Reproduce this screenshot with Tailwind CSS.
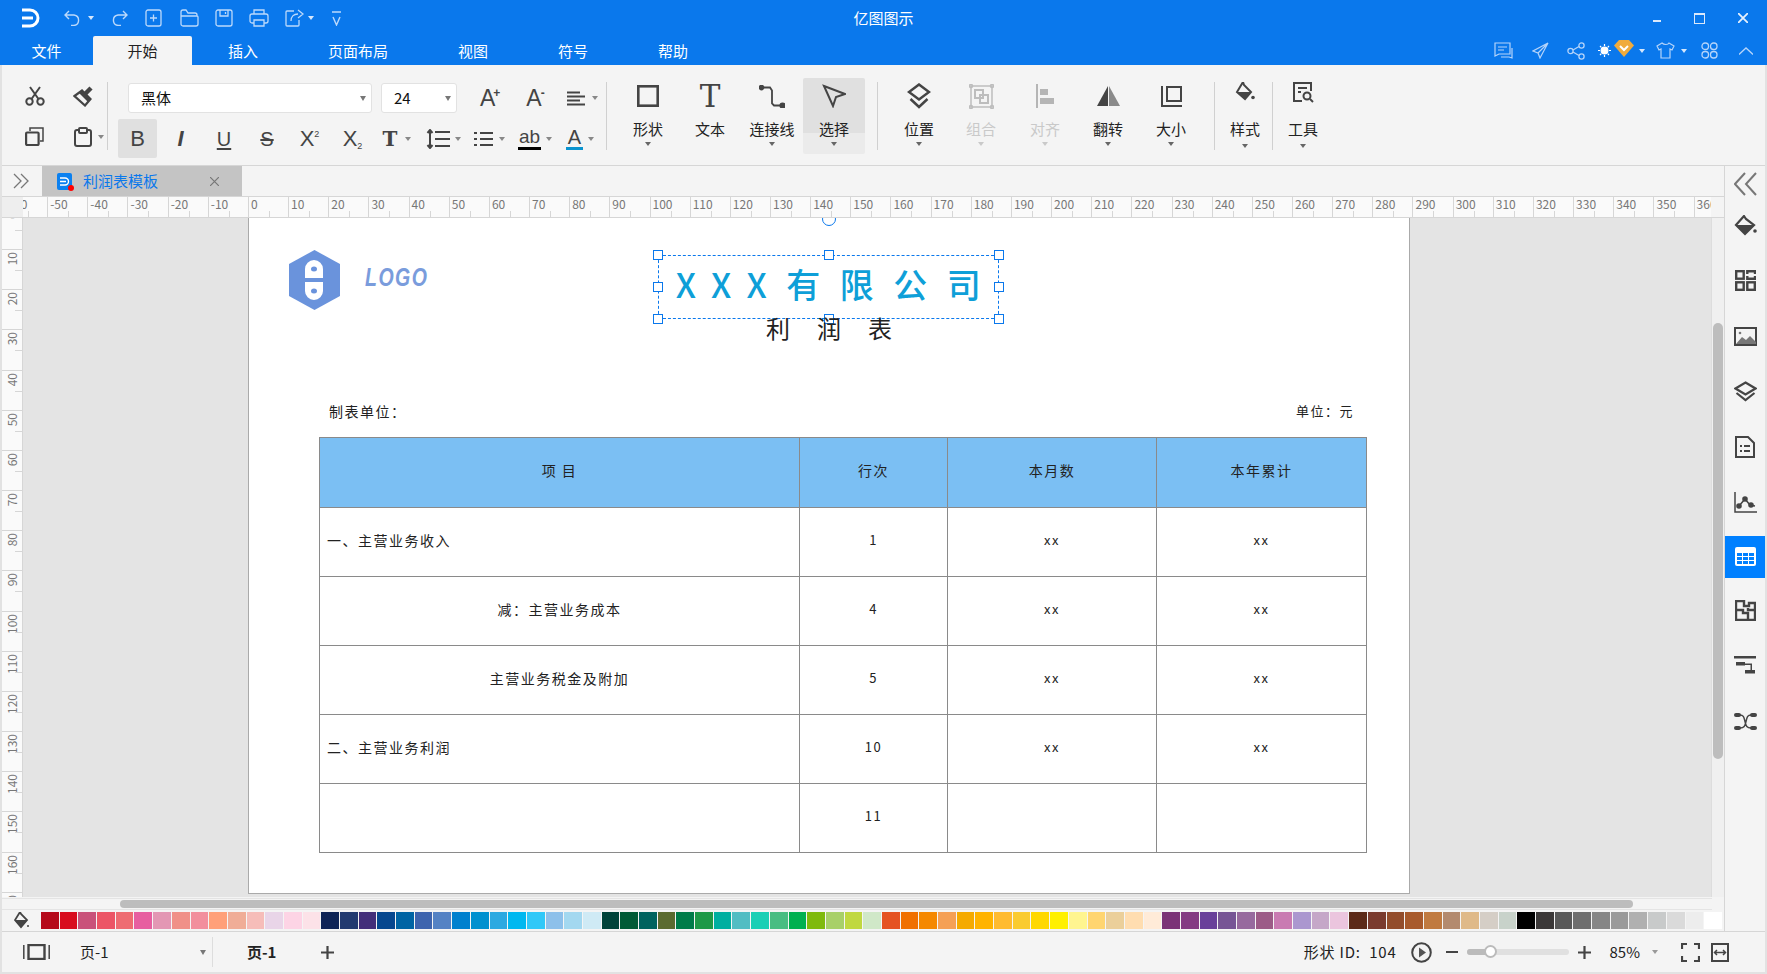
<!DOCTYPE html>
<html lang="zh-CN">
<head>
<meta charset="UTF-8">
<title>亿图图示</title>
<script src="https://cdn.jsdelivr.net/npm/@tailwindcss/browser@4"></script>
</head>
<body class="w-[1767px] h-[974px] overflow-hidden flex flex-col bg-[#e2e2e2] text-[#222] font-['Noto_Sans_CJK_SC',sans-serif]">

<!-- title bar -->
<header class="bg-[#0a78ec] h-[65px] flex-none text-white">
  <div class="h-[36px] grid grid-cols-[1fr_auto_1fr] items-center">
    <div class="flex items-center text-[#bcd9fb]">
      <svg class="ml-[22px] w-[18px] h-[20px]" viewBox="0 0 18 20" fill="none" stroke="#fff" stroke-width="3"><path d="M0 2H8a8 8 0 0 1 0 16H0M0 10H11"/></svg>
      <svg class="ml-[24px] w-[17px] h-[16px]" viewBox="0 0 17 16" fill="none" stroke="currentColor" stroke-width="1.4"><path d="M5 1L1 5l4 4M1 5h9a5.300 5.300 0 0 1 0 10.500H7"/></svg>
      <span class="ml-[7px] w-0 h-0 border-x-[3px] border-x-transparent border-t-[4px] border-t-[#d5e7fc]"></span>
      <svg class="ml-[18px] w-[16px] h-[16px]" viewBox="0 0 16 16" fill="none" stroke="currentColor" stroke-width="1.4"><path d="M11 1l4 4-4 4M15 5H6a5.300 5.300 0 0 0 0 10.500h3"/></svg>
      <svg class="ml-[17px] w-[17px] h-[18px]" viewBox="0 0 17 18" fill="none" stroke="currentColor" stroke-width="1.3"><rect x="1" y="1" width="15" height="16" rx="2"/><path d="M8.500 5.500v7M5 9h7"/></svg>
      <svg class="ml-[18px] w-[19px] h-[18px]" viewBox="0 0 19 18" fill="none" stroke="currentColor" stroke-width="1.3"><path d="M1 15V3a2 2 0 0 1 2-2h3l2 3h7a2 2 0 0 1 2 2v1M1 7h16a1 1 0 0 1 1 1v7a2 2 0 0 1-2 2H3a2 2 0 0 1-2-2z"/></svg>
      <svg class="ml-[16px] w-[18px] h-[18px]" viewBox="0 0 18 18" fill="none" stroke="currentColor" stroke-width="1.3"><rect x="1" y="1" width="16" height="16" rx="2"/><path d="M5 1v6h8V1M10.500 3v2"/></svg>
      <svg class="ml-[16px] w-[20px] h-[18px]" viewBox="0 0 20 18" fill="none" stroke="currentColor" stroke-width="1.3"><path d="M5 5V1h10v4M5 14H3a2 2 0 0 1-2-2V7a2 2 0 0 1 2-2h14a2 2 0 0 1 2 2v5a2 2 0 0 1-2 2h-2M5 11h10v6H5z"/></svg>
      <svg class="ml-[16px] w-[19px] h-[18px]" viewBox="0 0 19 18" fill="none" stroke="currentColor" stroke-width="1.3"><path d="M9 2H2a1 1 0 0 0-1 1v13a1 1 0 0 0 1 1h11a1 1 0 0 0 1-1v-5M6 12c0-5 3-7 7-7M13 1l5 4-5 4"/></svg>
      <span class="ml-[4px] w-0 h-0 border-x-[3px] border-x-transparent border-t-[4px] border-t-[#d5e7fc]"></span>
      <svg class="ml-[18px] w-[9px] h-[15px]" viewBox="0 0 9 15" fill="none" stroke="currentColor" stroke-width="1.4"><path d="M0 1h9M1 6l3.500 8L8 6"/></svg>
    </div>
    <div class="text-[15px]">亿图图示</div>
    <div class="flex justify-end items-center pr-[3px]">
      <span class="w-[43px] flex justify-center"><span class="w-[8px] h-[2px] mt-[6px] bg-[#dbe9fb]"></span></span>
      <span class="w-[43px] flex justify-center"><span class="w-[11px] h-[11px] border border-[#dbe9fb] border-t-2"></span></span>
      <span class="w-[43px] flex justify-center"><svg class="w-[10px] h-[10px]" viewBox="0 0 10 10" stroke="#e6f0fd" stroke-width="1.800"><path d="M0 0l10 10M10 0L0 10"/></svg></span>
    </div>
  </div>
  <div class="h-[29px] flex items-center text-[15px]">
    <nav class="flex h-full leading-[30px]">
      <span class="w-[93px] text-center">文件</span>
      <span class="w-[99px] text-center bg-[#f4f4f4] text-[#222] rounded-t-[2px]">开始</span>
      <span class="pl-[36px] pr-[35px]">插入</span>
      <span class="px-[35px]">页面布局</span>
      <span class="px-[35px]">视图</span>
      <span class="px-[35px]">符号</span>
      <span class="px-[35px]">帮助</span>
    </nav>
    <div class="ml-auto mr-[14px] flex items-center text-[#b5d4fa]">
      <svg class="w-[19px] h-[18px]" viewBox="0 0 19 18" fill="none" stroke="currentColor" stroke-width="1.200"><path d="M1 1h15v11H5l-4 2zM4 5h9M4 8h6M18 6v10l-3-1H7"/></svg>
      <svg class="ml-[19px] w-[17px] h-[17px]" viewBox="0 0 17 17" fill="none" stroke="currentColor" stroke-width="1.200"><path d="M16 1L1 9l5 2 10-10-8 15-2-5"/></svg>
      <svg class="ml-[18px] w-[18px] h-[18px]" viewBox="0 0 18 18" fill="none" stroke="currentColor" stroke-width="1.300"><circle cx="3.500" cy="9" r="2.600"/><circle cx="14.500" cy="3.500" r="2.600"/><circle cx="14.500" cy="14.500" r="2.600"/><path d="M6 8l6-3.500M6 10l6 3.500"/></svg>
      <svg class="ml-[13px] w-[13px] h-[13px]" viewBox="0 0 13 13" stroke="#fff" stroke-width="1.200"><circle cx="6.500" cy="6.500" r="3.400" fill="#fff"/><path d="M6.500 0v2M6.500 11v2M0 6.500h2M11 6.500h2M2 2l1.300 1.300M9.700 9.700L11 11M2 11l1.300-1.300M9.700 3.300L11 2"/></svg>
      <svg class="ml-[3px] mb-[4px] w-[20px] h-[17px]" viewBox="0 0 20 17"><path d="M5 0h10l5 5.500L10 17 0 5.500z" fill="#f0ab3c"/><path d="M6 6l4 4 4-4" fill="none" stroke="#fff" stroke-width="2"/></svg>
      <span class="ml-[5px] w-0 h-0 border-x-[3px] border-x-transparent border-t-[4px] border-t-[#d5e7fc]"></span>
      <svg class="ml-[11px] w-[19px] h-[17px]" viewBox="0 0 19 17" fill="none" stroke="currentColor" stroke-width="1.200"><path d="M6 1L1 4l2 4 2-1v9h9V7l2 1 2-4-5-3c-1 2-5 2-7 0z"/></svg>
      <span class="ml-[6px] w-0 h-0 border-x-[3px] border-x-transparent border-t-[4px] border-t-[#d5e7fc]"></span>
      <svg class="ml-[14px] w-[17px] h-[17px]" viewBox="0 0 17 17" fill="none" stroke="currentColor" stroke-width="1.300"><rect x="1" y="1" width="6.500" height="6.500" rx="3"/><rect x="9.500" y="1" width="6.500" height="6.500" rx="3"/><rect x="1" y="9.500" width="6.500" height="6.500" rx="3"/><rect x="9.500" y="9.500" width="6.500" height="6.500" rx="3"/></svg>
      <svg class="ml-[21px] w-[14px] h-[8px]" viewBox="0 0 14 8" fill="none" stroke="currentColor" stroke-width="1.300"><path d="M0 7.500L7 1l7 6.500"/></svg>
    </div>
  </div>
</header>

<div class="flex-1 min-h-0 flex flex-col mx-[2px] mb-[2px] bg-[#f4f4f4]">

  <!-- ribbon -->
  <section class="h-[101px] flex-none border-b border-[#d6d6d6] flex pt-[13px] text-[#444]">
    <!-- clipboard -->
    <div class="w-[105px] flex-none grid grid-cols-[55px_50px] grid-rows-[36px_45px] justify-items-center items-center pl-[5px]">
      <svg class="w-[20px] h-[20px]" viewBox="0 0 20 20" fill="none" stroke="#444" stroke-width="2"><circle cx="4.500" cy="15.500" r="3.200"/><circle cx="15.500" cy="15.500" r="3.200"/><path d="M6.500 13L15 1M13.500 13L5 1"/></svg>
      <svg class="w-[21px] h-[21px] -ml-[7px]" viewBox="0 0 21 21"><path d="M12 8l6-6" stroke="#444" stroke-width="4.500"/><path d="M1.500 10L9 4.500l8.500 8.500L12 19.500z" fill="none" stroke="#444" stroke-width="2.200"/><path d="M9 4.500l8.500 8.500-2.500 3L6 7z" fill="#444"/></svg>
      <svg class="w-[19px] h-[19px]" viewBox="0 0 19 19" fill="none" stroke="#444" stroke-width="2.200"><rect x="1.100" y="5.500" width="12.500" height="12.500" rx="1"/><path d="M5 4V1h13v13h-3" stroke-width="1.500"/></svg>
      <span class="flex items-center ml-[3px]">
        <svg class="w-[18px] h-[20px]" viewBox="0 0 18 20" fill="none" stroke="#444" stroke-width="2"><rect x="1" y="3" width="16" height="16" rx="2"/><rect x="5" y="1" width="8" height="5" rx="1" fill="#f4f4f4"/></svg>
        <span class="ml-[6px] w-0 h-0 border-x-[3px] border-x-transparent border-t-[4px] border-t-[#888]"></span>
      </span>
    </div>
    <i class="w-px h-[68px] mt-[4px] bg-[#d0d0d0] flex-none"></i>
    <!-- font group -->
    <div class="w-[498px] flex-none">
      <div class="h-[41px] flex items-center pl-[20px] pb-[1px]">
        <div class="w-[244px] h-[30px] bg-white border border-[#e2e2e2] rounded-[3px] flex items-center justify-between pl-[12px] pr-[5px] text-[15px] text-[#111]">黑体<span class="w-0 h-0 border-x-[3.500px] border-x-transparent border-t-[5px] border-t-[#777]"></span></div>
        <div class="ml-[9px] w-[76px] h-[30px] bg-white border border-[#e2e2e2] rounded-[3px] flex items-center justify-between pl-[12px] pr-[5px] text-[15px] text-[#111]">24<span class="w-0 h-0 border-x-[3.500px] border-x-transparent border-t-[5px] border-t-[#777]"></span></div>
        <span class="ml-[23px] text-[23px] leading-none font-['Liberation_Sans',sans-serif] text-[#444]">A<sup class="text-[12px] font-bold -ml-[2px] -top-[9px]">+</sup></span>
        <span class="ml-[26px] text-[23px] leading-none font-['Liberation_Sans',sans-serif] text-[#444]">A<sup class="text-[12px] font-bold -ml-[1px] -top-[9px]">-</sup></span>
        <svg class="ml-[22px] w-[18px] h-[15px]" viewBox="0 0 18 15" stroke="#444" stroke-width="2.200"><path d="M0 1.500h13M0 5.500h18M0 9.500h13M0 13.500h18"/></svg>
        <span class="ml-[7px] w-0 h-0 border-x-[3px] border-x-transparent border-t-[4px] border-t-[#888]"></span>
      </div>
      <div class="h-[39px] flex items-center pl-[10px] text-[#444] font-['Liberation_Sans',sans-serif] text-[22px] leading-none">
        <span class="w-[39px] h-[39px] mr-[2px] bg-[#e0e0e0] rounded-[2px] flex items-center justify-center">B</span>
        <span class="w-[43px] text-center italic font-bold">I</span>
        <span class="w-[44px] text-center underline decoration-2 underline-offset-2 text-[20px]">U</span>
        <span class="w-[42px] text-center line-through decoration-2 text-[20px]">S</span>
        <span class="w-[43px] text-center">X<sup class="text-[9px] -top-[9px]">2</sup></span>
        <span class="w-[43px] text-center">X<sub class="text-[9px] -bottom-[3px]">2</sub></span>
        <span class="w-[46px] flex items-center justify-center font-['DejaVu_Serif',serif] text-[20px] font-bold">T<span class="ml-[8px] w-0 h-0 border-x-[3px] border-x-transparent border-t-[4px] border-t-[#888]"></span></span>
        <span class="w-[46px] flex items-center justify-center">
          <svg class="w-[24px] h-[20px]" viewBox="0 0 24 20" fill="none" stroke="#444" stroke-width="2"><path d="M4 1v18M1.500 4L4 1l2.500 3M1.500 16L4 19l2.500-3M9 3h15M9 10h15M9 17h15"/></svg>
          <span class="ml-[5px] w-0 h-0 border-x-[3px] border-x-transparent border-t-[4px] border-t-[#888]"></span>
        </span>
        <span class="w-[47px] flex items-center justify-center">
          <svg class="w-[19px] h-[16px]" viewBox="0 0 19 16" stroke="#444" stroke-width="2.200"><path d="M0 2h3M6 2h13M0 8h3M6 8h13M0 14h3M6 14h13"/></svg>
          <span class="ml-[6px] w-0 h-0 border-x-[3px] border-x-transparent border-t-[4px] border-t-[#888]"></span>
        </span>
        <span class="w-[44px] flex items-center justify-center text-[19px]">
          <span class="border-b-[3px] border-black leading-[20px] px-[1px]">ab</span>
          <span class="ml-[5px] w-0 h-0 border-x-[3px] border-x-transparent border-t-[4px] border-t-[#888]"></span>
        </span>
        <span class="w-[46px] flex items-center justify-center text-[20px]">
          <span class="border-b-[3px] border-[#0a94cf] leading-[20px] px-[2px]">A</span>
          <span class="ml-[5px] w-0 h-0 border-x-[3px] border-x-transparent border-t-[4px] border-t-[#888]"></span>
        </span>
      </div>
    </div>
    <i class="w-px h-[68px] mt-[4px] bg-[#d0d0d0] flex-none"></i>
    <!-- big buttons -->
    <div class="flex ml-[10px] text-[15px] text-[#222] leading-[20px]">
      <div class="w-[62px] h-[76px] flex flex-col items-center">
        <div class="h-[36px] flex items-center"><svg class="w-[22px] h-[22px]" viewBox="0 0 22 22" fill="none" stroke="#444" stroke-width="2.600"><rect x="1.300" y="1.300" width="19.400" height="19.400"/></svg></div>
        <div class="mt-[5px]">形状</div>
        <span class="mt-[3px] w-0 h-0 border-x-[3.500px] border-x-transparent border-t-[4px] border-t-[#666]"></span>
      </div>
      <div class="w-[62px] h-[76px] flex flex-col items-center">
        <div class="h-[36px] flex items-center font-['DejaVu_Serif',serif] text-[31px] text-[#444]">T</div>
        <div class="mt-[5px]">文本</div>
      </div>
      <div class="w-[62px] h-[76px] flex flex-col items-center">
        <div class="h-[36px] flex items-center"><svg class="w-[26px] h-[23px]" viewBox="0 0 26 23" fill="none" stroke="#444" stroke-width="1.800"><circle cx="2.500" cy="2.500" r="2" fill="#444"/><circle cx="23.500" cy="20.500" r="2.200" fill="#444"/><path d="M5 2.500h6l2 3v13l2 2h6"/></svg></div>
        <div class="mt-[5px]">连接线</div>
        <span class="mt-[3px] w-0 h-0 border-x-[3.500px] border-x-transparent border-t-[4px] border-t-[#666]"></span>
      </div>
      <div class="w-[62px] h-[76px] flex flex-col items-center rounded-[2px] bg-[linear-gradient(#e0e0e0_55px,#ebebeb_55px)]">
        <div class="h-[36px] flex items-center"><svg class="w-[24px] h-[24px]" viewBox="0 0 24 24" fill="none" stroke="#444" stroke-width="2"><path d="M2 2l21 8-9 3-3 9z"/></svg></div>
        <div class="mt-[5px]">选择</div>
        <span class="mt-[3px] w-0 h-0 border-x-[3.500px] border-x-transparent border-t-[4px] border-t-[#666]"></span>
      </div>
      <i class="ml-[12px] w-px h-[68px] mt-[4px] bg-[#d0d0d0]"></i>
      <div class="ml-[10px] w-[62px] h-[76px] flex flex-col items-center">
        <div class="h-[36px] flex items-center"><svg class="w-[24px] h-[26px]" viewBox="0 0 24 26" fill="none" stroke="#444" stroke-width="2.500"><path d="M12 1.500L22 9l-10 7.500L2 9zM3.500 16l8.500 8 8.500-8"/></svg></div>
        <div class="mt-[5px]">位置</div>
        <span class="mt-[3px] w-0 h-0 border-x-[3.500px] border-x-transparent border-t-[4px] border-t-[#666]"></span>
      </div>
      <div class="w-[62px] h-[76px] flex flex-col items-center text-[#c9c9c9]">
        <div class="h-[36px] flex items-center"><svg class="w-[25px] h-[25px]" viewBox="0 0 25 25" fill="none" stroke="#bdbdbd" stroke-width="1.500"><rect x="2" y="2" width="21" height="21"/><rect x="6" y="6" width="8" height="8" stroke-width="2"/><rect x="11" y="11" width="8" height="8" stroke-width="2"/><circle cx="2" cy="2" r="1.500"/><circle cx="23" cy="2" r="1.500"/><circle cx="2" cy="23" r="1.500"/><circle cx="23" cy="23" r="1.500"/></svg></div>
        <div class="mt-[5px]">组合</div>
        <span class="mt-[3px] w-0 h-0 border-x-[3.500px] border-x-transparent border-t-[4px] border-t-[#c9c9c9]"></span>
      </div>
      <div class="ml-[2px] w-[62px] h-[76px] flex flex-col items-center text-[#c9c9c9]">
        <div class="h-[36px] flex items-center"><svg class="w-[18px] h-[24px]" viewBox="0 0 18 24" fill="#b5b5b5"><rect x="0" y="0" width="2" height="24"/><rect x="4" y="5" width="8" height="6"/><rect x="4" y="14" width="14" height="6"/></svg></div>
        <div class="mt-[5px]">对齐</div>
        <span class="mt-[3px] w-0 h-0 border-x-[3.500px] border-x-transparent border-t-[4px] border-t-[#c9c9c9]"></span>
      </div>
      <div class="ml-[1px] w-[62px] h-[76px] flex flex-col items-center">
        <div class="h-[36px] flex items-center"><svg class="w-[23px] h-[20px]" viewBox="0 0 23 20"><path d="M11 0v20H0z" fill="#444"/><path d="M12 0v20h11z" fill="#8a8a8a"/></svg></div>
        <div class="mt-[5px]">翻转</div>
        <span class="mt-[3px] w-0 h-0 border-x-[3.500px] border-x-transparent border-t-[4px] border-t-[#666]"></span>
      </div>
      <div class="ml-[1px] w-[62px] h-[76px] flex flex-col items-center">
        <div class="h-[36px] flex items-center"><svg class="w-[21px] h-[21px]" viewBox="0 0 21 21" fill="none" stroke="#444" stroke-width="2"><path d="M1 0v20h20"/><rect x="6" y="1" width="14" height="14"/></svg></div>
        <div class="mt-[5px]">大小</div>
        <span class="mt-[3px] w-0 h-0 border-x-[3.500px] border-x-transparent border-t-[4px] border-t-[#666]"></span>
      </div>
      <i class="ml-[12px] w-px h-[68px] mt-[4px] bg-[#d0d0d0]"></i>
      <div class="w-[57px] h-[76px] flex flex-col items-center pl-[3px]">
        <div class="h-[28px] flex items-center"><svg class="w-[20px] h-[20px]" viewBox="0 0 20 20"><path d="M8 0l1 3 7 7-6 7-8-7z" fill="none" stroke="#444" stroke-width="2"/><path d="M2 10h14l-6 7z" fill="#444"/><circle cx="18" cy="15.500" r="1.800" fill="#444"/></svg></div>
        <div class="mt-[13px]">样式</div>
        <span class="mt-[5px] w-0 h-0 border-x-[3.500px] border-x-transparent border-t-[4px] border-t-[#666]"></span>
      </div>
      <i class="w-px h-[68px] mt-[4px] bg-[#d0d0d0]"></i>
      <div class="w-[60px] h-[76px] flex flex-col items-center">
        <div class="h-[28px] flex items-center"><svg class="w-[21px] h-[21px]" viewBox="0 0 21 21" fill="none" stroke="#444" stroke-width="2"><path d="M9 19H1V1h17v8M5 6h9M5 10h3"/><circle cx="14" cy="14" r="3.500"/><path d="M17 17l3 3"/></svg></div>
        <div class="mt-[13px]">工具</div>
        <span class="mt-[5px] w-0 h-0 border-x-[3.500px] border-x-transparent border-t-[4px] border-t-[#666]"></span>
      </div>
    </div>
  </section>

  <div class="flex-1 min-h-0 flex">
    <!-- working area -->
    <div class="w-[1722px] flex-none flex flex-col">
      <div class="h-[31px] flex-none border-b border-[#d6d6d6] flex">
        <div class="w-[40px] flex items-center justify-center pr-[2px]"><svg class="w-[16px] h-[16px]" viewBox="0 0 16 16" fill="none" stroke="#777" stroke-width="1.300"><path d="M1 1l7 7-7 7M8 1l7 7-7 7"/></svg></div>
        <div class="w-[200px] h-[30px] bg-[#c4c4c4] flex items-center pl-[15px]">
          <span class="relative w-[15px] h-[17px] bg-[#0a80f0] rounded-[2px] flex items-center justify-center">
            <svg class="w-[10px] h-[9px]" viewBox="0 0 10 9" fill="none" stroke="#fff" stroke-width="1.400"><path d="M0 1h5a3.500 3.500 0 0 1 0 7H0M0 4.500h6"/></svg>
            <span class="absolute -right-[2px] -bottom-[1px] w-[6px] h-[6px] rounded-full bg-[#f00]"></span>
          </span>
          <span class="ml-[11px] text-[15px] text-[#0a78ec]">利润表模板</span>
          <svg class="ml-[52px] w-[9px] h-[9px]" viewBox="0 0 9 9" stroke="#777" stroke-width="1.200"><path d="M0 0l9 9M9 0L0 9"/></svg>
        </div>
      </div>
      <!-- rulers -->
      <div class="h-[21px] flex-none flex border-b border-[#d6d6d6]">
        <div class="w-[21px] flex-none bg-[#eee]"></div>
        <div id="hruler" class="w-[1688px] h-[23px] -mt-[2px] pt-[2px] flex-none overflow-hidden flex"></div>
      </div>
      <div class="flex-1 min-h-0 flex">
        <div id="vruler" class="w-[21px] flex-none overflow-hidden bg-[#fafafa] border-r border-[#d6d6d6] h-[679px] flex flex-col"></div>
        <!-- canvas -->
        <div class="relative w-[1688px] flex-none h-[679px] overflow-hidden bg-[#e4e4e4]">
          <div class="absolute left-[225px] top-0 w-[1162px] h-[676px] bg-white border-x border-b border-[#aaa]">
            <svg class="absolute left-[40px] top-[32px] w-[51px] h-[60px]" viewBox="0 0 51 60"><path d="M25.500 0L51 14v32L25.500 60 0 46V14z" fill="#6a93dc"/><path d="M16 28V19a9 9 0 0 1 18 0v9zM16 32h18v9a9 9 0 0 1-18 0z" fill="#fff"/><ellipse cx="25" cy="19" rx="3" ry="2.500" fill="#6a93dc"/><ellipse cx="25" cy="41" rx="3" ry="2.500" fill="#6a93dc"/></svg>
            <span class="absolute left-[116px] top-[40px] origin-left scale-x-75 text-[26px] italic font-bold tracking-[2px] font-['Liberation_Sans',sans-serif] text-[#7a9cdc]">LOGO</span>

            <div class="absolute left-[409px] top-[37px] w-[341px] h-[64px] border border-dashed border-[#0a78ec] flex items-center justify-center text-[34px] font-medium text-[#0e9fd8] tracking-[19.500px] whitespace-nowrap pl-[19px] leading-none pb-[7px]"><span class="tracking-[15px]">XX</span>X有限公司</div>
            <span class="absolute left-[404px] top-[32px] w-[10px] h-[10px] bg-white border border-[#0a78ec]"></span>
            <span class="absolute left-[575px] top-[32px] w-[10px] h-[10px] bg-white border border-[#0a78ec]"></span>
            <span class="absolute left-[745px] top-[32px] w-[10px] h-[10px] bg-white border border-[#0a78ec]"></span>
            <span class="absolute left-[404px] top-[64px] w-[10px] h-[10px] bg-white border border-[#0a78ec]"></span>
            <span class="absolute left-[745px] top-[64px] w-[10px] h-[10px] bg-white border border-[#0a78ec]"></span>
            <span class="absolute left-[404px] top-[96px] w-[10px] h-[10px] bg-white border border-[#0a78ec]"></span>
            <span class="absolute left-[575px] top-[96px] w-[10px] h-[10px] bg-white border border-[#0a78ec]"></span>
            <span class="absolute left-[745px] top-[96px] w-[10px] h-[10px] bg-white border border-[#0a78ec]"></span>
            <span class="absolute left-[573px] -top-[6px] w-[14px] h-[14px] rounded-full bg-white border border-[#0a78ec]"></span>

            <div class="absolute left-[517px] top-[95px] text-[24px] leading-[30px] tracking-[27px] text-[#222] whitespace-nowrap">利润表</div>
            <div class="absolute left-[80px] top-[183px] text-[14px] leading-[20px] tracking-[1.500px]">制表单位：</div>
            <div class="absolute left-[1047px] top-[183px] text-[13px] leading-[20px] tracking-[1.500px]">单位：元</div>

            <table class="absolute left-[70px] top-[219px] w-[1047px] h-[415px] table-fixed border-collapse text-[14px] tracking-[1.500px] text-center text-[#222] [&_td]:pb-[4px]">
              <colgroup><col class="w-[480px]"><col class="w-[148px]"><col class="w-[209px]"><col class="w-[210px]"></colgroup>
              <tbody>
                <tr class="h-[70px] bg-[#7bbff3]">
                  <td class="border border-[#8a8a8a]">项 目</td><td class="border border-[#8a8a8a]">行次</td><td class="border border-[#8a8a8a]">本月数</td><td class="border border-[#8a8a8a]">本年累计</td>
                </tr>
                <tr class="h-[69px]">
                  <td class="border border-[#8a8a8a] text-left pl-[7px] [&]:pb-[6px]">一、主营业务收入</td><td class="border border-[#8a8a8a] text-[13px]">1</td><td class="border border-[#8a8a8a] text-[13px]">xx</td><td class="border border-[#8a8a8a] text-[13px]">xx</td>
                </tr>
                <tr class="h-[69px]">
                  <td class="border border-[#8a8a8a] [&]:pb-[6px]">减：主营业务成本</td><td class="border border-[#8a8a8a] text-[13px]">4</td><td class="border border-[#8a8a8a] text-[13px]">xx</td><td class="border border-[#8a8a8a] text-[13px]">xx</td>
                </tr>
                <tr class="h-[69px]">
                  <td class="border border-[#8a8a8a] [&]:pb-[6px]">主营业务税金及附加</td><td class="border border-[#8a8a8a] text-[13px]">5</td><td class="border border-[#8a8a8a] text-[13px]">xx</td><td class="border border-[#8a8a8a] text-[13px]">xx</td>
                </tr>
                <tr class="h-[69px]">
                  <td class="border border-[#8a8a8a] text-left pl-[7px]">二、主营业务利润</td><td class="border border-[#8a8a8a] text-[13px]">10</td><td class="border border-[#8a8a8a] text-[13px]">xx</td><td class="border border-[#8a8a8a] text-[13px]">xx</td>
                </tr>
                <tr class="h-[69px]">
                  <td class="border border-[#8a8a8a]"></td><td class="border border-[#8a8a8a] text-[13px]">11</td><td class="border border-[#8a8a8a]"></td><td class="border border-[#8a8a8a]"></td>
                </tr>
              </tbody>
            </table>
          </div>
        </div>
        <!-- vertical scrollbar -->
        <div class="flex-1 h-[679px] bg-[#f0f0f0] border-l border-[#ddd] pt-[105px] px-px"><div class="h-[436px] rounded-[5px] bg-[#bdbdbd]"></div></div>
      </div>
      <!-- horizontal scrollbar -->
      <div class="h-[12px] flex-none bg-[#f4f4f4] border-t border-b border-[#e4e4e4] pl-[118px] w-[1710px] py-px"><div class="w-[1513px] h-full rounded-[5px] bg-[#bdbdbd]"></div></div>
      <!-- colours -->
      <div class="h-[21px] flex-none flex items-center">
        <svg class="ml-[12px] w-[15px] h-[17px] flex-none" viewBox="0 0 15 17"><path d="M6 0l1 2 6 6-6 7-6-7z" fill="none" stroke="#444" stroke-width="1.800"/><path d="M1 8h12l-6 7z" fill="#444"/><circle cx="14" cy="14" r="1" fill="#444"/></svg>
        <div id="palette" class="ml-[12px] w-[1681px] flex-none h-[17px] flex gap-px"></div>
      </div>
    </div>
    <!-- right panel -->
    <aside class="flex-1 border-l border-[#d6d6d6] flex flex-col items-center text-[#444]">
      <div class="h-[39px] flex-none flex items-start pt-[6px]"><svg class="w-[23px] h-[24px]" viewBox="0 0 23 24" fill="none" stroke="#777" stroke-width="2"><path d="M11 1L1 12l10 11M22 1L12 12l10 11"/></svg></div>
      <div class="h-[48px] w-full flex-none flex items-start justify-center pt-[10px]"><svg class="w-[23px] h-[21px]" viewBox="0 0 23 21"><path d="M10 1l2 3 8 6-9 9-9-9z" fill="none" stroke="#444" stroke-width="2.200"/><path d="M2 10h18l-9 9z" fill="#444"/><circle cx="21" cy="16" r="1.800" fill="#444"/></svg></div>
      <div class="h-[55.500px] w-full flex-none flex items-center justify-center"><svg class="w-[21px] h-[21px]" viewBox="0 0 21 21" fill="none" stroke="#444" stroke-width="2.400"><rect x="1.200" y="1.200" width="7.500" height="7.500"/><path d="M12.300 4V1.200H20V4M12.300 6v2.700H20V6"/><rect x="1.200" y="12.300" width="7.500" height="7.500"/><rect x="12.300" y="12.300" width="7.500" height="7.500"/></svg></div>
      <div class="h-[55.500px] w-full flex-none flex items-center justify-center"><svg class="w-[23px] h-[19px]" viewBox="0 0 23 19"><rect x="1" y="1" width="21" height="17" fill="none" stroke="#444" stroke-width="2"/><path d="M2 17l6-7 4 3 4-4 6 6v2z" fill="#777"/><circle cx="6" cy="6" r="1.300" fill="#777"/></svg></div>
      <div class="h-[55.500px] w-full flex-none flex items-center justify-center"><svg class="w-[23px] h-[21px]" viewBox="0 0 23 21" fill="none" stroke="#444" stroke-width="2.200"><path d="M11.500 1.500l10 6-10 6-10-6zM2.500 12l9 7 9-7"/></svg></div>
      <div class="h-[55px] w-full flex-none flex items-center justify-center"><svg class="w-[20px] h-[22px]" viewBox="0 0 20 22" fill="none" stroke="#444" stroke-width="2"><path d="M1 1h12l6 6v14H1zM5 10h2M9 10h6M5 15h2M9 15h6"/></svg></div>
      <div class="h-[55px] w-full flex-none flex items-center justify-center"><svg class="w-[23px] h-[21px]" viewBox="0 0 23 21" fill="none" stroke="#444" stroke-width="2"><path d="M1 0v20h22M5 14l6-7 5 6 5 1" stroke-width="1.500"/><circle cx="5" cy="14" r="1.800" fill="#444"/><circle cx="11" cy="7" r="1.800" fill="#444"/><circle cx="17" cy="13" r="1.800" fill="#444"/></svg></div>
      <div class="h-[42px] w-full flex-none flex items-center justify-center bg-[#0080ff] mt-[6px]"><svg class="w-[21px] h-[19px]" viewBox="0 0 21 19"><rect x="0" y="0" width="21" height="19" rx="2" fill="#fff"/><path fill="#0080ff" d="M2 6h5v3H2zM8 6h5v3H8zM14 6h5v3h-5zM2 10h5v3H2zM8 10h5v3H8zM14 10h5v3h-5zM2 14h5v3H2zM8 14h5v3H8zM14 14h5v3h-5z"/></svg></div>
      <div class="h-[50px] w-full flex-none flex items-center justify-center mt-[8px]"><svg class="w-[21px] h-[21px]" viewBox="0 0 21 21" fill="none" stroke="#444" stroke-width="2.400"><path d="M1 1h8v5h5V3h6v17H1zM1 10h7v3h5v7M13 8v2h7"/></svg></div>
      <div class="h-[60px] w-full flex-none flex items-center justify-center"><svg class="w-[22px] h-[19px]" viewBox="0 0 22 19" fill="#444"><rect x="0" y="0" width="22" height="2.500"/><rect x="2" y="6" width="9" height="3.500"/><rect x="11" y="14" width="10" height="3.500"/><path d="M11 7.500h7v7h-1.500V9H11z"/></svg></div>
      <div class="h-[51px] w-full flex-none flex items-center justify-center"><svg class="w-[23px] h-[17px]" viewBox="0 0 23 17" fill="#444"><rect x="0" y="0" width="7" height="4" rx="2"/><rect x="16" y="0" width="7" height="4" rx="2"/><rect x="0" y="13" width="7" height="4" rx="2"/><rect x="16" y="13" width="7" height="4" rx="2"/><path d="M6 2c4 0 4 3 5 6.500S12 15 17 15M17 2c-4 0-4 3-5 6.500S11 15 6 15" fill="none" stroke="#444" stroke-width="1.500"/></svg></div>
    </aside>
  </div>

  <!-- status bar -->
  <footer class="h-[41px] flex-none border-t border-[#d6d6d6] flex items-center text-[15px] text-[#222]">
    <svg class="ml-[21px] w-[27px] h-[16px]" viewBox="0 0 27 16" fill="none" stroke="#444"><path d="M.8 1v14M26.200 1v14" stroke-width="1.500"/><rect x="5.500" y="1" width="16" height="14" stroke-width="2.400"/></svg>
    <span class="ml-[30px] w-[120px]">页-1</span>
    <span class="w-0 h-0 border-x-[3.500px] border-x-transparent border-t-[5px] border-t-[#777]"></span>
    <i class="ml-[6px] w-px h-[30px] bg-[#ddd]"></i>
    <span class="ml-[34px] font-bold">页-1</span>
    <svg class="ml-[45px] w-[13px] h-[13px]" viewBox="0 0 13 13" stroke="#444" stroke-width="2.200"><path d="M6.500 0v13M0 6.500h13"/></svg>
    <div class="ml-auto flex items-center mr-[36px]">
      <span class="whitespace-nowrap tracking-[.8px]">形状 ID:&nbsp; 104</span>
      <svg class="ml-[14px] w-[21px] h-[21px]" viewBox="0 0 21 21"><circle cx="10.500" cy="10.500" r="9.300" fill="none" stroke="#444" stroke-width="2"/><path d="M8 5.500l7 5-7 5z" fill="#555"/></svg>
      <span class="ml-[14px] w-[12px] h-[2.500px] bg-[#444]"></span>
      <span class="relative ml-[9px] w-[102px] h-[6px] rounded-full bg-[#e0e0e0]">
        <span class="block w-[23px] h-full rounded-l-full bg-[#bbb]"></span>
        <span class="absolute left-[17px] -top-[4px] w-[13px] h-[13px] rounded-full bg-white border-2 border-[#bbb]"></span>
      </span>
      <svg class="ml-[9px] w-[13px] h-[13px]" viewBox="0 0 13 13" stroke="#444" stroke-width="2.200"><path d="M6.500 0v13M0 6.500h13"/></svg>
      <span class="ml-[19px]">85%</span>
      <span class="ml-[12px] w-0 h-0 border-x-[3px] border-x-transparent border-t-[4px] border-t-[#999]"></span>
      <svg class="ml-[23px] w-[19px] h-[19px]" viewBox="0 0 19 19" fill="none" stroke="#444" stroke-width="2.200"><path d="M1 6V1h5M13 1h5v5M1 13v5h5M13 18h5v-5"/></svg>
      <svg class="ml-[11px] w-[18px] h-[19px]" viewBox="0 0 18 19" fill="none" stroke="#444" stroke-width="2"><rect x="1" y="1" width="16" height="17"/><path d="M4 9.500h10M6 7L3.500 9.500 6 12M12 7l2.500 2.500L12 12" stroke-width="1.500"/></svg>
    </div>
  </footer>
</div>

<script>
  // rulers
  const hruler = document.getElementById('hruler');
  for (let v = -60; v <= 360; v += 10) {
    const cell = document.createElement('div');
    cell.className = 'relative flex-none h-[20px] bg-[#fafafa] border-l border-[#d6d6d6] pl-[2px] text-[12px] leading-[14px] text-[#777] font-[\'Noto_Sans\',sans-serif]';
    cell.style.width = '40.17px';
    if (v === -60) cell.style.marginLeft = '-16px';
    cell.innerHTML = v + '<i class="absolute left-[20px] bottom-0 w-px h-[6px] bg-[#d6d6d6]"></i>';
    hruler.appendChild(cell);
  }
  const vruler = document.getElementById('vruler');
  for (let v = 0; v <= 170; v += 10) {
    const cell = document.createElement('div');
    cell.className = 'relative flex-none w-full border-t border-[#d6d6d6] text-[12px] text-[#777] font-[\'Noto_Sans\',sans-serif]';
    cell.style.height = '40.17px';
    if (v === 0) cell.style.marginTop = '-9px';
    cell.innerHTML = '<span class="absolute left-[2px] top-[2px] [writing-mode:vertical-rl] rotate-180 leading-[16px]">' + v + '</span><i class="absolute right-0 top-[20px] h-px w-[7px] bg-[#d6d6d6]"></i>';
    vruler.appendChild(cell);
  }
  // palette
  const colors = ['#b5091a','#d80c1e','#c9527a','#ec5566','#ee6c72','#e75fa0','#e397b4','#f09088','#f28f9d','#ffa079','#f0ad97','#f6bdb9','#e9d5e8','#fdd4e5','#fce2e8',
    '#0f2557','#223a70','#432e7a','#06478f','#0064a4','#3e64ae','#5482c4','#0080ce','#0090cf','#2ca9e1','#00b8f0','#30c8f8','#8dc0ea','#a3d8f0','#cfeaf5',
    '#00433a','#005a36','#00635f','#5b6b30','#007c49','#1e9947','#00afa0','#52bdc3','#1acfb5','#48bd82','#00b050','#7fba0c','#a8d068','#c0d840','#d0e8c8',
    '#e55322','#f07000','#f58800','#f5a055','#f5aa00','#ffb300','#ffbb30','#facb30','#ffd800','#fff000','#fff590','#ffd570','#ebcf9a','#ffddb0','#ffebd8',
    '#7b3377','#843b83','#69409a','#775595','#976a9e','#9c5b87','#c97bb2','#ab97cf','#c5a7c8','#ebc5de',
    '#5c2a18','#7a3b2e','#934d2b','#a85a2c','#c07a40','#b38a6e','#dfb988','#d5cec6','#c8d2ca',
    '#000000','#3b3838','#595959','#6e6e6e','#868686','#9a9a9a','#b0b0b0','#c8caca','#dadada','#ededed','#ffffff'];
  const palette = document.getElementById('palette');
  colors.forEach(c => {
    const s = document.createElement('div');
    s.className = 'flex-1 h-full';
    s.style.background = c;
    palette.appendChild(s);
  });
</script>
</body>
</html>
